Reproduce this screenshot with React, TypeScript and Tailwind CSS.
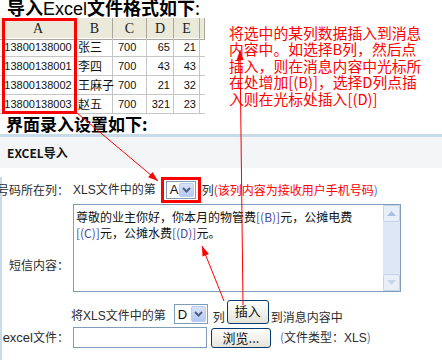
import React from "react";

const cjk = "font-['Noto_Sans_CJK_SC','Noto_Sans',sans-serif]";

function arrowHead(x1: number, y1: number, x2: number, y2: number, len = 10, half = 3.5) {
  const dx = x2 - x1;
  const dy = y2 - y1;
  const d = Math.hypot(dx, dy);
  const ux = dx / d;
  const uy = dy / d;
  const bx = x2 - ux * len;
  const by = y2 - uy * len;
  return `${x2},${y2} ${bx - uy * half},${by + ux * half} ${bx + uy * half},${by - ux * half}`;
}

const arrows: [number, number, number, number][] = [
  [77, 113, 158, 181],
  [243, 305, 240, 50],
  [224, 301, 202, 246],
];

function Select({ value, w, h }: { value: string; w: string; h: string }) {
  return (
    <div className={`flex ${w} ${h} border border-[#7f9db9] bg-white`}>
      <span className="flex-1 pl-[3px] font-['Liberation_Sans',sans-serif] text-[13px] leading-none flex items-center text-[#111]">
        {value}
      </span>
      <span className="m-[1px] flex w-[15px] items-center justify-center rounded-[2px] border border-[#b9cbef] bg-gradient-to-b from-[#d8e3fb] to-[#b5c8f2]">
        <svg width="9" height="6" viewBox="0 0 9 6">
          <path d="M1 1 L4.5 4.5 L8 1" fill="none" stroke="#4d6185" strokeWidth="2" />
        </svg>
      </span>
    </div>
  );
}

function XpButton({ children, className }: { children: React.ReactNode; className: string }) {
  return (
    <div
      className={`flex items-center justify-center rounded-[3px] border border-[#003c74] bg-gradient-to-b from-white to-[#e6e4d8] text-[13px] text-[#111] ${className}`}
    >
      {children}
    </div>
  );
}

const rows = [
  ["13800138000", "张三", "700", "65", "21"],
  ["13800138001", "李四", "700", "43", "43"],
  ["13800138002", "王麻子", "700", "21", "32"],
  ["13800138003", "赵五", "700", "321", "23"],
];

const cols = "grid grid-cols-[77px_36px_34px_27px_26px_5px]";

export default function App() {
  return (
    <div className={`relative h-[360px] w-[442px] overflow-hidden bg-white ${cjk}`}>
      {/* top: sample sheet + note */}
      <div className="flex">
        <div className="w-[225px] shrink-0">
          <div className="h-[18px] pl-[7px] text-[18px] font-bold leading-[14px] text-black whitespace-nowrap">
            导入<span className="font-['Liberation_Sans',sans-serif] font-normal">Excel</span>文件格式如下
            <span className="font-normal">:</span>
          </div>
          <div className="w-[205px]">
            <div className={`${cols} h-[20px] bg-[#ebe9d9]`}>
              {["A", "B", "C", "D", "E", ""].map((c, i) => (
                <div
                  key={i}
                  className="flex items-center justify-center border-r border-b border-[#aca899] font-['Liberation_Serif',serif] text-[14px] text-[#222]"
                >
                  {c}
                </div>
              ))}
            </div>
            {rows.map((r) => (
              <div key={r[0]} className={`${cols} h-[19px] text-[#111]`}>
                <div className="flex items-center justify-center border-r border-b border-[#c6c6c6] font-['Liberation_Sans',sans-serif] text-[11px]">
                  {r[0]}
                </div>
                <div className="flex items-center border-r border-b border-[#c6c6c6] pl-[1px] text-[12px] whitespace-nowrap">
                  {r[1]}
                </div>
                <div className="flex items-center border-r border-b border-[#c6c6c6] pl-[5px] font-['Liberation_Sans',sans-serif] text-[11px]">
                  {r[2]}
                </div>
                <div className="flex items-center justify-end border-r border-b border-[#c6c6c6] pr-[3px] font-['Liberation_Sans',sans-serif] text-[11px]">
                  {r[3]}
                </div>
                <div className="flex items-center justify-end border-r border-b border-[#c6c6c6] pr-[3px] font-['Liberation_Sans',sans-serif] text-[11px]">
                  {r[4]}
                </div>
                <div className="border-b border-[#c6c6c6]" />
              </div>
            ))}
          </div>
        </div>
        <div className="pt-[25px] pl-[4px] text-[14.8px] leading-[16.4px] text-[#ff0000] whitespace-nowrap">
          <div>将选中的某列数据插入到消息</div>
          <div>内容中。如选择B列，然后点</div>
          <div>插入，则在消息内容中光标所</div>
          <div>在处增加[(B)]，选择D列点插</div>
          <div>入则在光标处插入[(D)]</div>
        </div>
      </div>

      <div className="h-[20px] pl-[6px] text-[17px] font-bold leading-[19px] text-black">界面录入设置如下:</div>

      {/* form panel */}
      <div className="border-t-[3px] border-[#c8dbe8]">
        <div className="flex h-[31px] items-center bg-[#f4f5f7] pl-[7px] text-[12px] font-bold text-[#111]">
          EXCEL导入
        </div>
        <div className="h-[200px] border-l-2 border-[#c8dbe8] text-[12px] text-[#2b2b2b]">
          <div className="mt-[9px] flex h-[25px] items-center">
            <div className="flex w-[67px] shrink-0 justify-end whitespace-nowrap">号码所在列：</div>
            <div className="ml-[4px] flex items-center whitespace-nowrap">
              <span>
                <span className="font-['Liberation_Sans',sans-serif]">XLS</span>文件中的第
              </span>
              <div className="ml-[5px] border-[3px] border-[#ff0000] px-[2px] py-[1px]">
                <Select value="A" w="w-[30px]" h="h-[18px]" />
              </div>
              <span className="ml-[1px]">列</span>
              <span className="text-[#ff0000]">(该列内容为接收用户手机号码</span>
              <span className="text-[#4a6fb0]">)</span>
            </div>
          </div>

          <div className="mt-[2px] flex">
            <div className="flex w-[67px] shrink-0 justify-end pt-[52px] whitespace-nowrap">短信内容：</div>
            <div className="ml-[4px] flex h-[88px] w-[328px] border border-[#7f9db9] bg-white">
              <div className="flex-1 pl-[2px] pt-[4px] leading-[16px] text-[#111]">
                <div className="whitespace-nowrap">
                  尊敬的业主你好，你本月的物管费<span className="text-[#4b4ba0]">[(B)]</span>元，公摊电费
                </div>
                <div className="whitespace-nowrap">
                  <span className="text-[#4b4ba0]">[(C)]</span>元，公摊水费<span className="text-[#4b4ba0]">[(D)]</span>元。
                </div>
              </div>
              <div className="flex w-[17px] flex-col bg-[#dde8f7]">
                <div className="flex h-[17px] items-center justify-center rounded-[2px] border border-[#c3d3ea] bg-[#e9eff8]">
                  <svg width="9" height="5" viewBox="0 0 9 5">
                    <path d="M0 5 L4.5 0 L9 5 Z" fill="#a9bfe0" />
                  </svg>
                </div>
                <div className="flex-1" />
                <div className="flex h-[17px] items-center justify-center rounded-[2px] border border-[#c3d3ea] bg-[#e9eff8]">
                  <svg width="9" height="5" viewBox="0 0 9 5">
                    <path d="M0 0 L4.5 5 L9 0 Z" fill="#c9d6ea" />
                  </svg>
                </div>
              </div>
            </div>
          </div>

          <div className="mt-[5px] flex h-[27px] items-end pl-[69px] leading-[13px] whitespace-nowrap">
            <span className="mb-[1px]">
              将<span className="font-['Liberation_Sans',sans-serif]">XLS</span>文件中的第
            </span>
            <div className="ml-[8px]">
              <Select value="D" w="w-[34px]" h="h-[20px]" />
            </div>
            <span className="mb-[1px] ml-[5px]">列</span>
            <XpButton className="ml-[2px] h-[24px] w-[42px] items-start pt-[3px]">插入</XpButton>
            <span className="mb-[1px] ml-[2px]">到消息内容中</span>
          </div>

          <div className="mt-[3px] flex h-[21px] items-center whitespace-nowrap">
            <div className="flex w-[67px] shrink-0 justify-end">
              <span className="font-['Liberation_Sans',sans-serif] text-[13px]">excel</span>文件：
            </div>
            <div className="ml-[4px] h-[21px] w-[134px] border border-[#7f9db9] bg-white" />
            <XpButton className="ml-[4px] h-[20px] w-[60px]">浏览...</XpButton>
            <span className="ml-[9px]">
              <span className="text-[#4a6fb0]">(</span>文件类型：<span className="font-['Liberation_Sans',sans-serif]">XLS</span>
              <span className="text-[#4a6fb0]">)</span>
            </span>
          </div>
        </div>
      </div>

      {/* annotations */}
      <svg className="pointer-events-none absolute inset-0" width="442" height="360" viewBox="0 0 442 360">
        <rect x="3.5" y="19.5" width="72" height="93" fill="none" stroke="#ff0000" strokeWidth="3" />
        {arrows.map(([x1, y1, x2, y2], i) => (
          <g key={i}>
            <line x1={x1} y1={y1} x2={x2} y2={y2} stroke="#ff0000" strokeWidth="1" />
            <polygon points={arrowHead(x1, y1, x2, y2)} fill="#ff0000" />
          </g>
        ))}
      </svg>
    </div>
  );
}
